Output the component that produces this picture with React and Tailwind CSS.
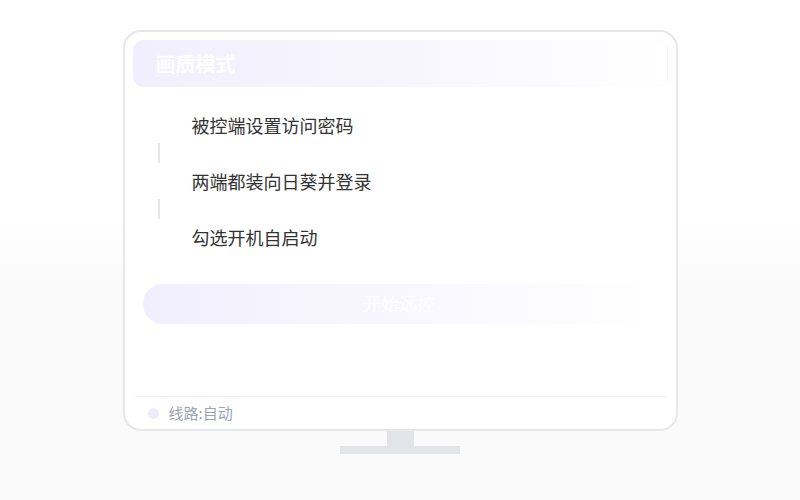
import React from 'react';

const steps = ['被控端设置访问密码', '两端都装向日葵并登录', '勾选开机自启动'];

const App = () => {
    return (
        <div
            className="w-[800px] h-[500px] flex flex-col items-center pt-[30px] bg-[linear-gradient(to_bottom,#ffffff_44%,#fafafb_56%,#fafafb_100%)]"
            style={{ fontFamily: '"Noto Sans CJK SC", "Noto Sans", sans-serif' }}
        >
            {/* monitor screen */}
            <div className="w-[555px] h-[401px] border-2 border-[#e5e7ea] rounded-[18px] bg-white flex flex-col px-2 pt-2">
                <div className="h-[47px] shrink-0 rounded-[10px] bg-gradient-to-r from-[#f1effd] via-[#f7f6fe] to-white flex items-center pl-[23px] border-r border-[#f3f4f6]">
                    <span className="text-[20px] font-bold text-white leading-none">画质模式</span>
                </div>

                <div className="mt-[26px] flex flex-col">
                    {steps.map((s, i) => (
                        <div key={s}>
                            <div className="pl-[59px] text-[18px] leading-[24px] text-[#333333]">{s}</div>
                            {i < steps.length - 1 && (
                                <div className="ml-[25px] my-[6px] w-[2px] h-[20px] bg-[#e5e7eb]" />
                            )}
                        </div>
                    ))}
                </div>

                <button
                    type="button"
                    className="mt-[35px] ml-[10px] w-[512px] h-10 shrink-0 rounded-full bg-gradient-to-r from-[#f2effd] via-[#f8f7fe] to-white text-white text-[18px]"
                    style={{ fontFamily: '"Liberation Serif", serif' }}
                >
                    开始远控
                </button>

                <div className="flex-1" />

                <div className="mx-[2px] border-t border-[#eef0f3] h-[33px] shrink-0 flex items-center pl-[13px]">
                    <span className="w-[11px] h-[11px] rounded-full bg-[#efedfd]" />
                    <span className="ml-[10px] text-[15px] text-[#9ca3af]">线路:自动</span>
                </div>
            </div>

            {/* stand */}
            <div className="w-[27px] h-[15px] bg-[#e1e4e8]" />
            <div className="w-[120px] h-[8px] bg-[#e1e4e8]" />
        </div>
    );
};

export default App;
